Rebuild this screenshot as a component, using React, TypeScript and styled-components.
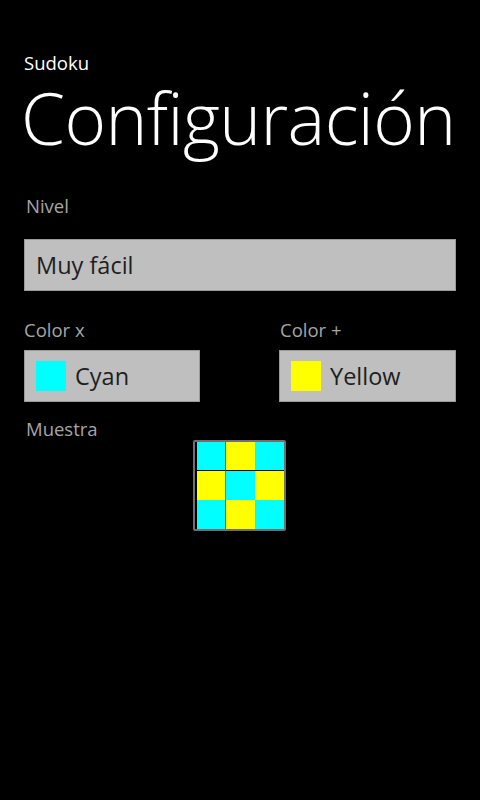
import React from 'react';
import styled, { createGlobalStyle } from 'styled-components';

// --- GLOBAL ---
const GlobalStyle = createGlobalStyle`
    html, body {
        margin: 0;
        padding: 0;
        background: #000;
    }
    body {
        font-family: "Open Sans", "Noto Sans", sans-serif;
        color: #fff;
    }
`;

// --- DATA ---
const CYAN = '#00ffff';
const YELLOW = '#ffff00';

// checkerboard pattern shown in the sample
const pattern = [
    ['x', '+', 'x'],
    ['+', 'x', '+'],
    ['x', '+', 'x'],
];

// --- STYLED COMPONENTS ---
const Page = styled.div`
    display: flex;
    flex-direction: column;
    width: 480px;
    height: 800px;
    padding: 51px 24px 0 24px;
    box-sizing: border-box;
    background: #000;
`;

const AppName = styled.div`
    font-size: 18.5px;
    line-height: 24px;
    color: #fff;
`;

const PageTitle = styled.h1`
    margin: 3px 0 0 -3px;
    font-size: 71px;
    font-weight: 300;
    line-height: 80px;
    letter-spacing: -0.6px;
    color: #fff;
    white-space: nowrap;
`;

const Label = styled.div<{ $indent?: number }>`
    font-size: 18.5px;
    line-height: 22px;
    color: #a6a6a6;
    padding-left: ${p => p.$indent ?? 2}px;
`;

const Field = styled.div<{ $gap?: number }>`
    display: flex;
    flex-direction: column;
    gap: ${p => p.$gap ?? 9}px;
`;

const Picker = styled.div`
    display: flex;
    align-items: center;
    gap: 9px;
    height: 52px;
    padding: 0 11px;
    box-sizing: border-box;
    background: #bfbfbf;
    border: 1px solid #9a9a9a;
    color: #1e1e1e;
    font-size: 23.5px;
`;

const Swatch = styled.span<{ $color: string }>`
    width: 30px;
    height: 30px;
    background: ${p => p.$color};
    flex-shrink: 0;
`;

const ColorRow = styled.div`
    display: grid;
    grid-template-columns: 176px 177px;
    justify-content: space-between;
`;

const SampleRow = styled.div`
    display: flex;
    justify-content: center;
`;

const Frame = styled.div`
    border: 2px solid #6f6f6f;
    border-radius: 2px;
    margin-left: -1px;
`;

const Board = styled.div`
    display: grid;
    grid-template-columns: repeat(3, 29px);
    grid-template-rows: repeat(3, 29px);
    border-left: 2px solid #000;
`;

const Cell = styled.div<{ $color: string; $lineRight?: boolean; $lineBottom?: boolean }>`
    background: ${p => p.$color};
    box-shadow: ${p => [
        p.$lineRight ? 'inset -1px 0 0 rgba(40,60,30,0.6)' : '',
        p.$lineBottom ? 'inset 0 -1px 0 #000' : '',
    ].filter(Boolean).join(', ') || 'none'};
`;

export default function App() {
    return (
        <>
            <GlobalStyle />
            <Page>
                <AppName>Sudoku</AppName>
                <PageTitle>Configuración</PageTitle>

                <Field $gap={22} style={{ marginTop: 37 }}>
                    <Label>Nivel</Label>
                    <Picker>Muy fácil</Picker>
                </Field>

                <ColorRow style={{ marginTop: 28 }}>
                    <Field>
                        <Label $indent={0}>Color x</Label>
                        <Picker>
                            <Swatch $color={CYAN} />
                            Cyan
                        </Picker>
                    </Field>
                    <Field>
                        <Label $indent={1}>Color +</Label>
                        <Picker>
                            <Swatch $color={YELLOW} />
                            Yellow
                        </Picker>
                    </Field>
                </ColorRow>

                <Field $gap={0} style={{ marginTop: 16 }}>
                    <Label>Muestra</Label>
                    <SampleRow>
                        <Frame>
                            <Board>
                                {pattern.map((row, r) =>
                                    row.map((c, i) => (
                                        <Cell
                                            key={`${r}-${i}`}
                                            $color={c === 'x' ? CYAN : YELLOW}
                                            $lineRight={i === 0}
                                            $lineBottom={r === 0}
                                        />
                                    ))
                                )}
                            </Board>
                        </Frame>
                    </SampleRow>
                </Field>
            </Page>
        </>
    );
}
